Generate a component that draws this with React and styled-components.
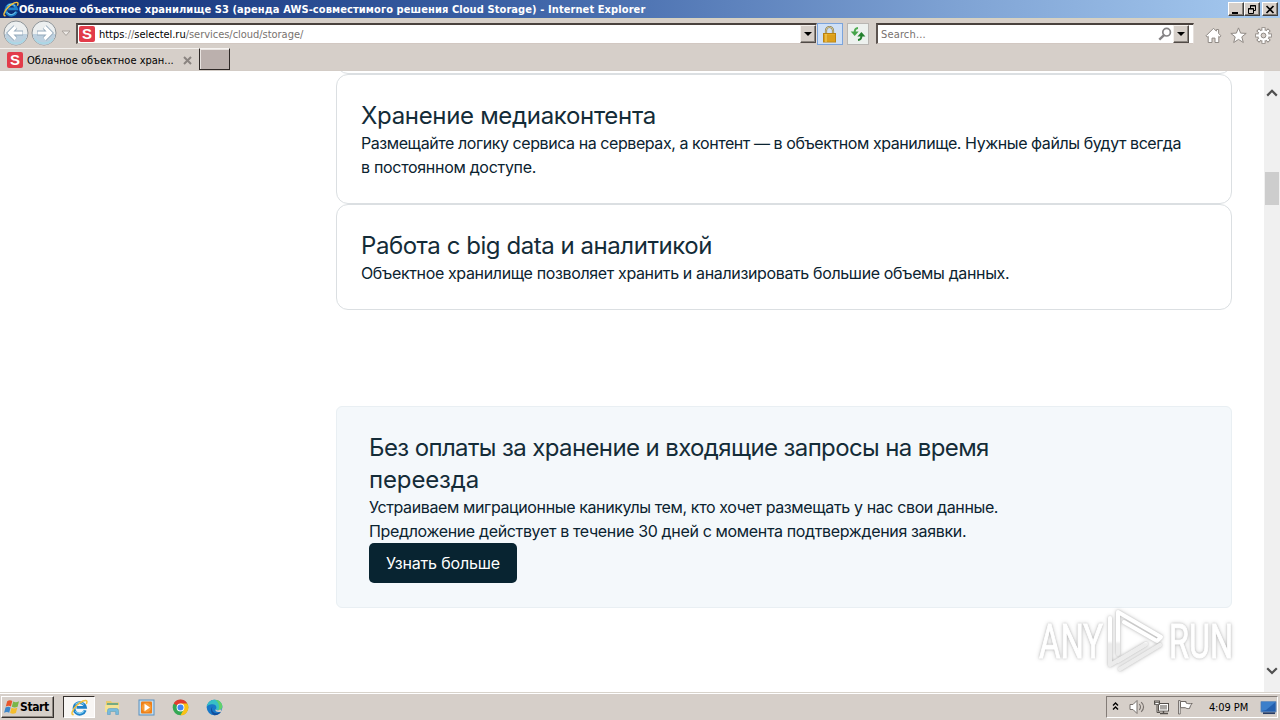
import styled, { createGlobalStyle, css } from "styled-components";

const GlobalStyle = createGlobalStyle`
    * { box-sizing: border-box; }
    body { margin: 0; overflow: hidden; }
    h2, p { margin: 0; font-weight: 400; }
    button { font: inherit; }
    svg { display: block; flex: none; }
`

const Screen = styled.div`
    width: 1280px;
    height: 720px;
    display: flex;
    flex-direction: column;
    position: relative;
    overflow: hidden;
    background: #d6cfc9;
    font-family: 'DejaVu Sans Condensed', 'DejaVu Sans', sans-serif;
    font-size: 11px;
    color: #000;
`
const Text = styled.span`
    white-space: pre;
    letter-spacing: ${props => props.$track || 0}px;
`

// title bar
const TitleBar = styled.header`
    height: 18px;
    flex: none;
    display: flex;
    align-items: center;
    padding: 0 2px 0 3px;
    color: white;
    font-weight: 700;
    background: linear-gradient(90deg, #0c2a72 0%, #3c62a6 40%, #7fa3d4 75%, #a6caf0 100%);
`
const WindowButtons = styled.div`
    display: flex;
    margin-left: auto;
`
const WindowButton = styled.button`
    width: 16px;
    height: 14px;
    padding: 0;
    margin-left: ${props => props.$gap || 0}px;
    display: flex;
    align-items: center;
    justify-content: center;
    background: #d6cfc9;
    border: 1px solid;
    border-color: #fff #404040 #404040 #fff;
    box-shadow: inset -1px -1px #868078;
`

// navigation row
const Toolbar = styled.nav`
    height: 30px;
    flex: none;
    display: flex;
    align-items: flex-start;
    padding: 4px 8px 0 2px;
    border-top: 1px solid #d6d2bf;
`
const HistoryButtons = styled.div`
    display: flex;
    width: 74px;
    height: 26px;
    margin-top: -3px;
    align-items: center;
`
const Field = styled.div`
    width: ${props => props.$width}px;
    height: 21px;
    margin-left: ${props => props.$gap || 0}px;
    display: flex;
    align-items: center;
    padding-left: ${props => props.$pad}px;
    background: #fff;
    border-style: solid;
    border-width: 2px 1px 1px 2px;
    border-color: #4a423e #e6e0dc #d2c8c2 #5c5450;
    color: #77716e;
`
const FieldEnd = styled.div`
    display: flex;
    align-items: center;
    gap: 1px;
    margin-left: auto;
    margin-right: ${props => props.$right || 0}px;
`
const Host = styled.b`
    font-weight: 400;
    color: #000;
`
const DropButton = styled.button`
    width: 16px;
    height: 18px;
    padding: 0;
    display: flex;
    align-items: center;
    justify-content: center;
    background: #d6cfc9;
    border: 1px solid;
    border-color: #f4f0ec #504a46 #504a46 #f4f0ec;
    box-shadow: inset -1px -1px #8c8680;
`
const SquareButton = styled.button`
    width: ${props => props.$width}px;
    height: 22px;
    padding: 0 1px 0 0;
    margin-left: ${props => props.$gap || 0}px;
    display: flex;
    align-items: center;
    justify-content: center;
    background: ${props => props.$active ? '#cfe0f6' : '#edf1ee'};
    border: 1px solid ${props => props.$active ? '#7ba4dc' : '#b9b6b2'};
`
const CommandIcons = styled.div`
    display: flex;
    gap: 8px;
    margin: 4px 0 0 auto;
`

// tabs
const TabRow = styled.div`
    height: 23px;
    flex: none;
    display: flex;
    border-bottom: 1px solid #d3ccc6;
`
const Tab = styled.div`
    width: 199px;
    height: 23px;
    display: flex;
    align-items: center;
    padding: 0 7px 0 7px;
    border-top: 1px solid #f4f1ee;
`
const TabClose = styled.button`
    margin-left: auto;
    padding: 0;
    border: 0;
    background: none;
`
const NewTab = styled.div`
    width: 31px;
    height: 22px;
    background: #bbb0ad;
    border: 1px solid;
    border-color: #f7f4f2 #2e2826 #2e2826 #2e2826;
    box-shadow: inset 1px 1px #e9e4e1;
`
const FaviconBox = styled.span`
    width: 16px;
    height: 16px;
    flex: none;
    display: flex;
    align-items: center;
    justify-content: center;
    margin-right: 4px;
    border-radius: 2px;
    background: #e23c4a;
    color: #fff;
    font: 700 15px/16px 'Liberation Sans', sans-serif;
`

// page
const Viewport = styled.div`
    height: 621px;
    flex: none;
    display: flex;
    background: #fff;
    overflow: hidden;
`
const Page = styled.main`
    flex: 1;
    padding: 0 32px 0 336px;
    font-family: Inter, 'Open Sans', sans-serif;
    color: #0b2330;
`
const Card = styled.section`
    width: 896px;
    height: ${props => props.$height}px;
    margin-top: ${props => props.$shift || 0}px;
    padding: 24px;
    border: 1px solid #dbdfe2;
    border-radius: 12px;
`
const Promo = styled.section`
    width: 896px;
    height: 202px;
    margin-top: 96px;
    padding: 24px 32px;
    background: #f4f8fb;
    border: 1px solid #e9eff3;
    border-radius: 6px;
`
const Heading = styled.h2`
    height: ${props => props.$rows * 32}px;
    padding-top: 1px;
    font-size: 24px;
    line-height: 32px;
    color: #142c38;
`
const Paragraph = styled.p`
    font-size: 16px;
    line-height: 24px;
`
const MoreButton = styled.button`
    width: 148px;
    height: 40px;
    padding: 0;
    display: block;
    font-size: 16px;
    color: #fff;
    background: #082431;
    border: 0;
    border-radius: 5px;
`
const Scrollbar = styled.aside`
    width: 16px;
    display: flex;
    flex-direction: column;
    align-items: center;
    padding: 18px 0 17px;
    background: #f0f0f0;
`
const Thumb = styled.div`
    width: 14px;
    height: 33px;
    margin: 75px 0 auto;
    background: #cdcdcd;
`
const Watermark = styled.div`
    position: absolute;
    left: 1035px;
    top: 604px;
    filter: drop-shadow(0 0 1px rgba(0, 0, 0, .16)) drop-shadow(0 0 2px rgba(0, 0, 0, .2));
`

// taskbar
const Taskbar = styled.footer`
    height: 28px;
    flex: none;
    display: flex;
    align-items: center;
    padding: 1px 2px 0 1px;
    border-top: 1px solid #d8d3cb;
    box-shadow: inset 0 1px #fff;
`
const StartButton = styled.button`
    width: 53px;
    height: 22px;
    padding: 0 0 0 2px;
    display: flex;
    align-items: center;
    font-weight: 700;
    font-size: 12px;
    color: #000;
    background: #d6cfc9;
    border: 1px solid;
    border-color: #fff #35302d #35302d #fff;
    box-shadow: inset -1px -1px #8c8680;
`
const TaskItem = styled.div`
    width: 34px;
    height: 22px;
    display: flex;
    align-items: center;
    justify-content: center;
    ${props => props.$active && css`
        width: 32px;
        margin-left: 9px;
        background: #f8f6f4;
        border: 1px solid;
        border-color: #35302d #fff #fff #35302d;
    `}
`
const Tray = styled.div`
    width: 172px;
    height: 22px;
    margin-left: auto;
    display: flex;
    align-items: center;
    padding-left: 4px;
    border: 1px solid;
    border-color: #837c77 #fff #fff #837c77;
`
const TrayIcons = styled.div`
    display: flex;
    gap: 7px;
    margin-left: 9px;
`
const Clock = styled.span`
    width: 54px;
    margin: 0 5px 0 8px;
    text-align: center;
    white-space: nowrap;
    letter-spacing: -0.1px;
`

const IeIcon = ({ size = 16 }) => (
    <svg width={size} height={size} viewBox="0 0 16 16" fill="none">
        <path d="M13.4 10.6A5.4 5.4 0 1 1 13.6 7.9H5.2" stroke="#2182c8" strokeWidth="2.7" />
        <path d="M12.6 10.8A5 5 0 0 1 4 11.3M4.2 5A5 5 0 0 1 12 5.2" stroke="#7fd0f5" strokeWidth="1" />
        <path d="M2.6 14.6C-.5 15.4 1 10.4 5.2 6.2 9.3 2 14.2.2 14.9 2.1c.3.8 0 1.6-.5 2.6" stroke="#f3c13b" strokeWidth="1.4" />
    </svg>
)

const Arrow = ({ forward }) => (
    <svg width="28" height="26" viewBox="0 0 28 26">
        <g transform={forward ? "translate(28 0) scale(-1 1)" : undefined}>
            <circle cx="14" cy="13" r="12" fill="#eceff0" stroke="#8f9599" />
            <path d="M2.8 14a11.2 11 0 0 0 22.4 0Z" fill="#bdd0df" />
            <path d="M5 19a11 10 0 0 0 18 0" fill="none" stroke="#a9d8e6" strokeWidth="1.5" />
            <path d="M13.5 7 7.5 13l6 6M8.5 13H21" fill="none" stroke="#94a9bb" strokeWidth="5" />
            <path d="M13.5 7 7.5 13l6 6M8.5 13h12" fill="none" stroke="#fff" strokeWidth="3.2" />
        </g>
    </svg>
)

const HistoryCaret = () => (
    <svg width="18" height="9" viewBox="0 0 18 9"><path d="M4 2h8L8 6.5Z" fill="#ece8e5" stroke="#aaa39e" /></svg>
)

const Caret = () => <svg width="8" height="4" viewBox="0 0 8 4"><path d="M0 0h8L4 4Z" /></svg>

const Chevron = ({ down }) => (
    <svg width="12" height="8" viewBox="0 0 12 8">
        <path d={down ? "M1.2 1.2 6 6l4.8-4.8" : "M1.2 6.6 6 1.8l4.8 4.8"} fill="none" stroke="#505050" strokeWidth="2.2" />
    </svg>
)

const LockIcon = () => (
    <svg width="15" height="17" viewBox="0 0 15 17">
        <path d="M4 8V4.5a3.5 3.5 0 0 1 7 0V8" fill="none" stroke="#8b8058" strokeWidth="2.2" />
        <path d="M4 8V4.5a3.5 3.5 0 0 1 7 0V8" fill="none" stroke="#e5d7a0" strokeWidth=".8" />
        <rect x="1.5" y="7.5" width="12" height="8.5" fill="#e6ab22" stroke="#b98213" />
        <path d="M2 10h11M2 12h11M2 14h11" stroke="#c58b14" strokeWidth=".7" />
        <path d="M4 8v8" stroke="#f8d66e" />
    </svg>
)

const RefreshIcon = () => (
    <svg width="16" height="16" viewBox="0 0 16 16">
        <path d="M8 2C5.6 2.2 4.7 3.6 4.7 6" fill="none" stroke="#4fac51" strokeWidth="2" />
        <path d="M.7 5.600h8L4.700 10Z" fill="#46a34a" />
        <path d="M8 14c2.400-.2 3.400-1.400 3.400-4" fill="none" stroke="#23802d" strokeWidth="2" />
        <path d="M7.400 10.400h8L11.400 6Z" fill="#23802d" />
    </svg>
)

const SearchIcon = () => (
    <svg width="14" height="14" viewBox="0 0 14 14" fill="none" stroke="#858385">
        <circle cx="8.6" cy="5.2" r="3.8" strokeWidth="1.7" />
        <path d="M6 8.2 1.3 12.7" strokeWidth="2.4" />
    </svg>
)

const HomeIcon = () => (
    <svg width="17" height="17" viewBox="0 0 17 17">
        <path d="M8.5 1.3 1 8.8l1.3 1.3.9-.8v6.2H7v-4.4h3v4.4h3.8V9.3l.9.8L16 8.8l-2.4-2.4V2.5h-2.2v1.7Z" fill="#fff" stroke="#8f8984" />
    </svg>
)

const StarIcon = () => (
    <svg width="17" height="17" viewBox="0 0 17 17">
        <path d="m8.5.9 2.1 5.2 5.6.3-4.4 3.5 1.5 5.6-4.8-3.1-4.8 3.1 1.5-5.6L.8 6.4l5.6-.3Z" fill="#fff" stroke="#8f8984" />
    </svg>
)

const teeth = [0, 45, 90, 135, 180, 225, 270, 315]
const GearIcon = () => (
    <svg width="17" height="17" viewBox="0 0 17 17">
        <g fill="#fff" stroke="#8f8984">
            {teeth.map(a => <rect key={a} x="7" y=".7" width="3" height="4" transform={`rotate(${a} 8.5 8.5)`} />)}
            <circle cx="8.5" cy="8.5" r="5.7" />
        </g>
        {teeth.map(a => <rect key={a} x="7.5" y="1.2" width="2" height="4" fill="#fff" transform={`rotate(${a} 8.5 8.5)`} />)}
        <circle cx="8.5" cy="8.5" r="2.4" fill="#d6cfc9" stroke="#8f8984" />
    </svg>
)

const StartFlag = () => (
    <svg width="16" height="16" viewBox="0 0 16 16">
        <path d="M3.2 2.2c2-1.2 3.6-1.1 5.1-.1L6.9 7.4C5.2 6.5 3.8 6.6 1.8 7.6Z" fill="#e8562b" />
        <path d="M9.2 2.5c1.8.9 3.4.9 5.8-.2l-1.4 5.4c-2 1-3.7 1-5.8.1Z" fill="#7ab648" />
        <path d="M1.5 8.5c2-1 3.5-1 5.1-.1l-1.4 5.3c-1.6-1-3.1-.9-5.1 0Z" fill="#3c86ca" />
        <path d="M7.5 8.8c1.9 1 3.7.9 5.8-.1l-1.4 5.2c-2.1 1.1-3.8 1-5.8.1Z" fill="#f4bd2d" />
    </svg>
)

const FolderIcon = () => (
    <svg width="18" height="17" viewBox="-1 0 18 17">
        <path d="M2 2h5l1 1.5h7V13H2Z" fill="#e8cb6c" />
        <path d="M3 4h11v2H3Z" fill="#74aa82" />
        <path d="M1 6h14v7H1Z" fill="#f4e294" />
        <path d="M3.5 15.5v-4q0-2 2-2h7q2 0 2 2v4h-2.8v-3H6.3v3Z" fill="#78bbdd" stroke="#5d9cc1" strokeWidth=".6" />
    </svg>
)

const MediaIcon = () => (
    <svg width="17" height="17" viewBox="0 0 17 17">
        <rect x="1" y="1" width="15" height="15" fill="#c3def1" stroke="#5b91bf" />
        <rect x="3" y="2.5" width="11" height="12" rx="1" fill="#ee7f18" />
        <circle cx="8.5" cy="8.5" r="4.8" fill="#f69b35" />
        <path d="M6.5 4.8v7.4l5.5-3.7Z" fill="#fff" />
    </svg>
)

const ChromeIcon = () => (
    <svg width="17" height="17" viewBox="0 0 17 17">
        <circle cx="8.5" cy="8.5" r="7.8" fill="#34a853" />
        <path d="M8.5 8.5 1.7 4.6A7.8 7.8 0 0 1 15.3 4.6Z" fill="#e33b2e" />
        <path d="M8.5 4.6h6.8a7.8 7.8 0 0 1-6.8 11.7l3.3-5.8Z" fill="#fbc116" />
        <circle cx="8.5" cy="8.5" r="3.9" fill="#fff" />
        <circle cx="8.5" cy="8.5" r="3" fill="#4285f4" />
    </svg>
)

const EdgeIcon = () => (
    <svg width="17" height="17" viewBox="0 0 17 17">
        <circle cx="8.5" cy="8.5" r="7.8" fill="#1878c8" />
        <path d="M.8 7.6C1.5 3.3 4.7.7 8.7.7c4.5 0 7.6 3.1 7.6 6.7 0 2.4-1.9 3.8-4 3.8-1.9 0-2.8-.8-2.2-1.5C11.2 8.2 9.8 5.5 6.8 5.3 3.9 5 1.8 6.1.8 7.6Z" fill="#37bfc6" />
        <path d="M9.5.8c4 .4 6.8 3.2 6.8 6.6 0 2.4-1.9 3.8-4 3.8 1.6-4.3.4-7.4-2.8-10.4Z" fill="#62d16b" />
        <path d="M6.4 7.7c-1.6 3.7 1.2 7 5.4 6.4 1.3-.2 2.2-.7 3.2-1.3-1.3 2.1-3.6 3.5-6.4 3.5-3.5-1.4-4.8-6.2-2.2-8.6Z" fill="#124e9c" />
        <path d="M10.1 9.7c-.6.8.3 1.5 2.2 1.5 1.4 0 2.4-.4 3.2-1.2l-.5 2.8c-3.6 1-6.9-.8-4.9-3.1Z" fill="#d6cfc9" />
    </svg>
)

const TrayChevrons = () => (
    <svg width="9" height="12" viewBox="0 0 9 10" fill="none" stroke="#000" strokeWidth="1.4">
        <path d="m2 3.5 2.5-2.5L7 3.5M2 7.5l2.5-2.5L7 7.5" />
    </svg>
)

const SpeakerIcon = () => (
    <svg width="17" height="16" viewBox="0 0 17 16">
        <path d="M1 5.5h3l4-4v13l-4-4H1Z" fill="#fff" stroke="#77716d" />
        <path d="M10.3 5c1.6 2 1.6 4 0 6M12.2 3.2c3 3 3 6.5 0 9.6" fill="none" stroke="#77716d" strokeWidth="1.1" />
    </svg>
)

const NetworkIcon = () => (
    <svg width="17" height="16" viewBox="0 0 17 16">
        <rect x="5.5" y="4.5" width="10" height="7.5" fill="#a8a5a2" stroke="#55504c" />
        <rect x="6.5" y="5.5" width="8" height="5.5" fill="none" stroke="#fff" />
        <path d="M7 14.5h8M10.5 12v2" stroke="#55504c" strokeWidth="1.4" />
        <path d="M1.5 1.5v4h5v-4M3 1v3M5 1v3M4 5.5v8h3" fill="none" stroke="#55504c" />
        <path d="M2 3.5h4v2H2Z" fill="#fff" stroke="#55504c" strokeWidth=".7" />
    </svg>
)

const FlagIcon = () => (
    <svg width="17" height="16" viewBox="0 0 17 16">
        <path d="M1.5 1.5h1.7V15H1.5Z" fill="#fff" stroke="#6e6864" strokeWidth=".9" />
        <path d="M3.5 2.5H9V4c2 .9 3.6.8 6.2.5-1.5 1.5-1.9 2.7-2.7 5-1.7.2-3 .1-4.2-.8H3.5Z" fill="#fff" stroke="#6e6864" />
    </svg>
)

const DesktopIcon = () => (
    <svg width="17" height="15" viewBox="0 0 17 15">
        <path d="M1 1.5h15V12H1Z" fill="#235fae" stroke="#6c91bd" />
        <path d="M1.5 2h14L6 10 1.5 11Z" fill="#3c7fca" />
        <path d="M3 13.2h12" stroke="#263b63" strokeWidth="1.7" />
    </svg>
)

const AnyRunMark = () => (
    <svg width="204" height="74" viewBox="0 0 204 74">
        <defs>
            <linearGradient id="mark" x1="0" y1="0" x2="0" y2="74" gradientUnits="userSpaceOnUse">
                <stop offset=".5" stopColor="#fff" />
                <stop offset=".54" stopColor="#ececec" />
                <stop offset="1" stopColor="#ececec" />
            </linearGradient>
        </defs>
        <g fill="url(#mark)" stroke="url(#mark)" strokeWidth="1" fontFamily="Roboto, sans-serif" fontSize="49">
            <text transform="translate(4 54) scale(.66 1)" textLength="97" lengthAdjust="spacingAndGlyphs">ANY</text>
            <text transform="translate(134 54) scale(.66 1)" textLength="97" lengthAdjust="spacingAndGlyphs">RUN</text>
        </g>
        <g fill="none" stroke="url(#mark)" strokeWidth="4" strokeLinejoin="round" strokeLinecap="round">
            <path d="M83 50V8l43 25-4 4-33-19" />
            <path d="M75 14v47l36-21" />
            <path d="m85 65 40-24M83 57l28-17" />
        </g>
    </svg>
)

const Favicon = () => <FaviconBox>S</FaviconBox>

function App () {
    return (
        <Screen>
            <GlobalStyle />
            <TitleBar>
                <IeIcon />
                <Text $track={0.09}>Облачное объектное хранилище S3 (аренда AWS-совместимого решения Cloud Storage) - Internet Explorer</Text>
                <WindowButtons>
                    <WindowButton><svg width="10" height="9"><path d="M1 7h6v2H1Z" /></svg></WindowButton>
                    <WindowButton>
                        <svg width="10" height="9" fill="none" stroke="#000"><path d="M3.5 3V.5h5v5H7M3 1h6M1.5 3.5h5v5h-5ZM1 4h6" /></svg>
                    </WindowButton>
                    <WindowButton $gap={2}>
                        <svg width="10" height="9" stroke="#000" strokeWidth="1.7"><path d="m1.5 1 7 7M8.5 1l-7 7" /></svg>
                    </WindowButton>
                </WindowButtons>
            </TitleBar>
            <Toolbar>
                <HistoryButtons>
                    <Arrow />
                    <Arrow forward />
                    <HistoryCaret />
                </HistoryButtons>
                <Field $width={741} $pad={1}>
                    <Favicon />
                    <Text $track={-0.03}><Host>https</Host>://<Host>selectel.ru</Host>/services/cloud/storage/</Text>
                    <FieldEnd><DropButton><Caret /></DropButton></FieldEnd>
                </Field>
                <SquareButton $width={26} $active><LockIcon /></SquareButton>
                <SquareButton $width={22} $gap={4}><RefreshIcon /></SquareButton>
                <Field $width={318} $gap={7} $pad={3}>
                    <Text $track={0.15}>Search...</Text>
                    <FieldEnd $right={4}>
                        <SearchIcon />
                        <DropButton><Caret /></DropButton>
                    </FieldEnd>
                </Field>
                <CommandIcons>
                    <HomeIcon />
                    <StarIcon />
                    <GearIcon />
                </CommandIcons>
            </Toolbar>
            <TabRow>
                <Tab>
                    <Favicon />
                    <Text>Облачное объектное хран...</Text>
                    <TabClose><svg width="9" height="9" stroke="#8a8480" strokeWidth="2"><path d="m1 1 7 7M8 1 1 8" /></svg></TabClose>
                </Tab>
                <NewTab />
            </TabRow>
            <Viewport>
                <Page>
                    <Card $height={80} $shift={-77} />
                    <Card $height={130}>
                        <Heading $rows={1}><Text $track={-0.32}>Хранение медиаконтента</Text></Heading>
                        <Paragraph>
                            <Text $track={-0.43}>Размещайте логику сервиса на серверах, а контент — в объектном хранилище. Нужные файлы будут всегда</Text><br />
                            <Text $track={-0.31}>в постоянном доступе.</Text>
                        </Paragraph>
                    </Card>
                    <Card $height={106}>
                        <Heading $rows={1}><Text $track={-0.45}>Работа с big data и аналитикой</Text></Heading>
                        <Paragraph><Text $track={-0.36}>Объектное хранилище позволяет хранить и анализировать большие объемы данных.</Text></Paragraph>
                    </Card>
                    <Promo>
                        <Heading $rows={2}>
                            <Text $track={-0.62}>Без оплаты за хранение и входящие запросы на время</Text><br />
                            <Text $track={-0.14}>переезда</Text>
                        </Heading>
                        <Paragraph>
                            <Text $track={-0.38}>Устраиваем миграционные каникулы тем, кто хочет размещать у нас свои данные.</Text><br />
                            <Text $track={-0.35}>Предложение действует в течение 30 дней с момента подтверждения заявки.</Text>
                        </Paragraph>
                        <MoreButton><Text $track={-0.15}>Узнать больше</Text></MoreButton>
                    </Promo>
                </Page>
                <Scrollbar>
                    <Chevron />
                    <Thumb />
                    <Chevron down />
                </Scrollbar>
            </Viewport>
            <Taskbar>
                <StartButton><StartFlag /><Text $track={-0.4}>Start</Text></StartButton>
                <TaskItem $active><IeIcon size={17} /></TaskItem>
                <TaskItem><FolderIcon /></TaskItem>
                <TaskItem><MediaIcon /></TaskItem>
                <TaskItem><ChromeIcon /></TaskItem>
                <TaskItem><EdgeIcon /></TaskItem>
                <Tray>
                    <TrayChevrons />
                    <TrayIcons>
                        <SpeakerIcon />
                        <NetworkIcon />
                        <FlagIcon />
                    </TrayIcons>
                    <Clock>4:09 PM</Clock>
                    <DesktopIcon />
                </Tray>
            </Taskbar>
            <Watermark><AnyRunMark /></Watermark>
        </Screen>
    )
}
export default App;
